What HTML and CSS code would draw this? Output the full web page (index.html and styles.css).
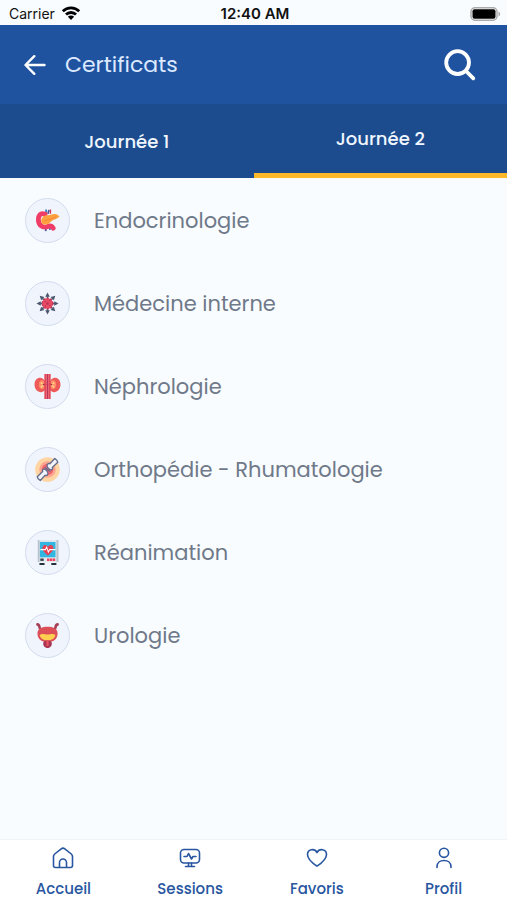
FILE: index.html
```html
<!DOCTYPE html>
<html lang="fr">
<head>
<meta charset="utf-8">
<meta name="viewport" content="width=device-width, initial-scale=1">
<title>Certificats</title>
<link rel="stylesheet" href="styles.css">
</head>
<body>
<div class="app">
  <div class="status">
    <div class="carrier">
      <span>Carrier</span>
      <svg width="20" height="15" viewBox="0 0 20 15" fill="none" stroke="#000" stroke-width="2.8"><path d="M1.800 5.200a11.600 11.600 0 0 1 16.400 0M5 8.600a7 7 0 0 1 10 0"/><path d="M10 14l-3.100-3.200a4.400 4.400 0 0 1 6.200 0z" fill="#000" stroke="none"/></svg>
    </div>
    <span class="time">12:40 AM</span>
    <svg class="battery" width="31" height="14" viewBox="0 0 31 14"><rect x="1" y=".8" width="26" height="12.4" rx="4" fill="#fff" stroke="#aaa" stroke-width="1.5"/><rect x="2.5" y="2.3" width="23" height="9.4" rx="2" fill="#000"/><path d="M28.5 4.500c2.200.8 2.200 4.200 0 5z" fill="#aaa"/></svg>
  </div>
  <header class="header">
    <button class="icon-button" type="button" aria-label="Retour">
      <svg width="22" height="22" viewBox="0 0 22 22" fill="none" stroke="#fff" stroke-width="2.4" stroke-linecap="round" stroke-linejoin="round"><path d="M20.500 11H1.800M10.300 2.200L1.500 11l8.800 8.800"/></svg>
    </button>
    <h1 class="title">Certificats</h1>
    <button class="icon-button" type="button" aria-label="Rechercher">
      <svg width="32" height="32" viewBox="0 0 32 32" fill="none" stroke="#fff" stroke-width="3.800" stroke-linecap="round"><circle cx="13.600" cy="13.600" r="11.400"/><path d="M22 22l7.300 7.300"/></svg>
    </button>
  </header>
  <div class="tabs" role="tablist">
    <button class="tab" type="button" role="tab" aria-selected="false">Journée 1</button>
    <button class="tab active" type="button" role="tab" aria-selected="true">Journée 2</button>
  </div>
  <main class="list">
    <a class="row" href="#">
      <span class="badge"><svg viewBox="0 0 26 26">
        <path d="M11.500 1.500v5M15.500 19v4" stroke="#3c7fb9" stroke-width="1.800"/><path d="M14.500 2l-1 4M12 19l-1 5" stroke="#45599b" stroke-width="1.800"/><path d="M16 1.500V6" stroke="#d8375a" stroke-width="1.500"/>
        <path d="M10.500 6.500C5.500 4.500 3.500 8 3.500 12c0 6 4.500 9 9 7.500 2.500-1.200 5-1 6.500 1.500" fill="none" stroke="#ef3d68" stroke-width="5" stroke-linecap="round" stroke-linejoin="round"/>
        <path d="M6.500 14c0-5 3-6.500 7-6.500 3.500 0 4.500-1.500 7.500-1.200 2 .1 2.700 1.500 4.500 2.200-1 1.800-3.500 2.800-6 3.800-3 1.200-3.500 3.500-6.500 4.500-3.500 1-6.500.2-6.500-2.800z" fill="#ffa13f"/><path d="M9.500 13.500c4-2 7-1 12-4.500" fill="none" stroke="#f78336" stroke-width="1"/>
      </svg></span><span>Endocrinologie</span>
    </a>
    <a class="row" href="#">
      <span class="badge"><svg viewBox="0 0 26 26">
        <g fill="#4b5870"><path id="arrow" d="M13 1.500l2.400 4.500h-1.600V9h-1.600V6h-1.600z"/><use href="#arrow" transform="rotate(45 13 13)"/><use href="#arrow" transform="rotate(90 13 13)"/><use href="#arrow" transform="rotate(135 13 13)"/><use href="#arrow" transform="rotate(180 13 13)"/><use href="#arrow" transform="rotate(225 13 13)"/><use href="#arrow" transform="rotate(270 13 13)"/><use href="#arrow" transform="rotate(315 13 13)"/></g>
        <circle cx="13" cy="13" r="5.500" fill="#e84a66" stroke="#c83755" stroke-width="1.500" stroke-dasharray="2 1.500"/><circle cx="13" cy="13" r="1.300" fill="#b73150"/><path d="M10 11h1M14.500 10h1M10.500 15.500h1M15 15h1" stroke="#ad2c4b"/>
      </svg></span><span>Médecine interne</span>
    </a>
    <a class="row" href="#">
      <span class="badge"><svg viewBox="0 0 26 26">
        <path d="M10.500 8C8 1.500-.5 3-.5 11s8 10 11 5.500zM15.500 8c2.500-6.500 11-5 11 3s-8 10-11 5.500z" fill="#ed5a58"/>
        <path d="M10 8.500C8 5 4 6.500 4 11s3.500 6 6 3M16 8.500c2-3.500 6-2 6 2.500s-3.500 6-6 3" fill="#ff9168"/>
        <path d="M6 9l3 2-3 3M20 9l-3 2 3 3" fill="none" stroke="#ffd084" stroke-width="1.600"/><path d="M8 11h4M14 11h4" stroke="#a72d50" stroke-width="1.500"/>
        <path d="M11 0v26" stroke="#e34859" stroke-width="2.600"/><path d="M15 0v26" stroke="#e34859" stroke-width="2.600"/><path d="M13 0v26" stroke="#b72e54"/>
      </svg></span><span>Néphrologie</span>
    </a>
    <a class="row" href="#">
      <span class="badge"><svg viewBox="0 0 26 26">
        <circle cx="13" cy="13" r="12.800" fill="#ffd5a4"/><circle cx="13" cy="13" r="8.600" fill="#ffa78e"/><circle cx="13" cy="13" r="6" fill="#f06670"/>
        <path d="M14 12c-3-3-1-6 1.500-5l5-5.500 2.200 1.800 1 2.200-5.700 5.500c1 2-1 3.500-4 1zM12 14c3 3 1 6-1.500 5l-5 5.500-2.200-1.800-1-2.200 5.700-5.500c-1-2 1-3.500 4-1z" fill="#f1f4fa" stroke="#646d8b" stroke-width="1.400" stroke-linejoin="round"/><path d="M10 11l6 4" stroke="#646d8b" stroke-width="1.300"/>
      </svg></span><span>Orthopédie - Rhumatologie</span>
    </a>
    <a class="row" href="#">
      <span class="badge"><svg viewBox="0 0 26 26"><g transform="translate(2 0) scale(.88 1)">
        <path d="M2 0h22v23H2z" fill="#e4e9ef"/><path d="M1 0h2v23H1zM23 0h2.500v23H23z" fill="#b8c2cc"/><path d="M3.500 2h18.500v16H3.500z" fill="#31b6e1"/>
        <path d="M13 16C8 12.500 5.500 10 6.800 7c1.200-2.800 5-2.400 6.200.3C14.200 4.600 18 4.200 19.200 7c1.300 3-1.200 5.500-6.200 9z" fill="#e74054"/><path d="M4 10h6l1.500-2.500 2 5L15 10h7" fill="none" stroke="#fff" stroke-width="1.100"/>
        <path d="M4 20.500h4" stroke="#34404c" stroke-width="2.500"/><path d="M12 20.500h10" stroke="#ed405b" stroke-width="2.500" stroke-dasharray="2.800 .6"/><path d="M3 25h6M17 25h6" stroke="#26313d" stroke-width="2"/>
      </g></svg></span><span>Réanimation</span>
    </a>
    <a class="row" href="#">
      <span class="badge"><svg viewBox="0 0 26 26"><g transform="translate(1.200 0) scale(.91 1)">
        <path d="M1.500 1.500c3.500 0 1 5 4.500 6M24.500 1.500c-3.500 0-1 5-4.500 6" fill="none" stroke="#a73f57" stroke-width="3" stroke-linecap="round"/>
        <path d="M13 4c6 0 11.500 1.500 11.500 7 0 6-5 9-11.500 9S1.500 17 1.500 11C1.500 5.500 7 4 13 4z" fill="#dc4f58"/><path d="M4 12.500c3-2 5-.5 9-.5s6-1.500 9 .5c-.8 3.500-4 5.500-9 5.500s-8.200-2-9-5.500z" fill="#ffcf50"/>
        <path d="M8.500 19.500c2-1.500 7-1.500 9 0 1.500 4-1.500 6.500-4.500 6.500s-6-2.500-4.500-6.500z" fill="#a73452"/><path d="M13 18v6" stroke="#e6555f" stroke-width="2.600"/>
      </g></svg></span><span>Urologie</span>
    </a>
  </main>
  <nav class="nav">
    <a class="nav-item" href="#"><svg width="22" height="22" viewBox="0 0 22 22"><path d="M1.500 9.500c0-1 .4-1.800 1.200-2.500l6.500-5.200c1.100-.9 2.500-.9 3.600 0L19.300 7c.8.700 1.200 1.500 1.200 2.500v9c0 1.200-.8 2-2 2h-15c-1.200 0-2-.8-2-2zM7.500 20v-4.500a3.500 3.500 0 0 1 7 0V20"/></svg><span>Accueil</span></a>
    <a class="nav-item" href="#"><svg width="22" height="22" viewBox="0 0 22 22"><rect x="1.500" y="2.500" width="19" height="13.500" rx="3.500"/><path d="M5 9.500h3l1.500-3 3 5.500 1.500-2.500h3M9.500 16v3.500M12.500 16v3.500M6.500 19.500h9"/></svg><span>Sessions</span></a>
    <a class="nav-item" href="#"><svg width="22" height="22" viewBox="0 0 22 22"><path d="M11 19.200C7 16.500 1.500 12 1.500 7.500c0-5.500 7-6.500 9.500-2 2.500-4.500 9.500-3.500 9.500 2 0 4.500-5.500 9-9.500 11.700z"/></svg><span>Favoris</span></a>
    <a class="nav-item" href="#"><svg width="22" height="22" viewBox="0 0 22 22"><circle cx="11" cy="5.800" r="4.600"/><path d="M4 20.500v-.8c0-4 3-6.200 7-6.200s7 2.200 7 6.200v.8"/></svg><span>Profil</span></a>
  </nav>
</div>
</body>
</html>
```

FILE: styles.css
```css
* { box-sizing: border-box; }
body {
  margin: 0;
  background: #f8fcff;
  font-family: Poppins, Inter, "Liberation Sans", sans-serif;
}
button { border: 0; padding: 0; background: none; font: inherit; color: inherit; }
a { color: inherit; text-decoration: none; }
svg { display: block; }

.app { min-height: 100vh; display: flex; flex-direction: column; }

.status {
  height: 25px;
  padding: 2px 6px 0 9px;
  display: grid;
  grid-template-columns: 1fr auto 1fr;
  align-items: center;
  font-family: Inter, sans-serif;
  font-size: 14px;
  color: #111;
}
.carrier { display: flex; align-items: center; gap: 6px; }
.time { font-size: 15px; font-weight: 600; }
.battery { justify-self: end; }

.header {
  height: 79px;
  padding: 0 31px 0 24px;
  display: flex;
  align-items: center;
  gap: 19px;
  background: #20539f;
}
.title { flex: 1; margin: 0; font-size: 22px; font-weight: 400; color: #dce9ff; }

.tabs { height: 74px; display: flex; background: #1c4c8e; color: #f0f6ff; }
.tab { flex: 1; font-size: 18px; font-weight: 500; }
.tab.active { border-bottom: 5px solid #fbb829; }

.list { flex: 1; }
.row {
  height: 83px;
  padding: 1px 25px 0;
  display: flex;
  align-items: center;
  gap: 24px;
  font-size: 21px;
  color: #6f7989;
}
.badge {
  width: 45px;
  height: 45px;
  display: grid;
  place-items: center;
  border: 1px solid #d3dcef;
  border-radius: 50%;
  background: #f0f4fc;
}
.badge svg { width: 25px; height: 25px; overflow: visible; }

.nav {
  height: 61px;
  display: flex;
  background: #fff;
  border-top: 1px solid #f0f3f7;
  color: #2856a0;
}
.nav-item {
  flex: 1;
  padding-top: 7px;
  display: flex;
  flex-direction: column;
  align-items: center;
  gap: 10px;
  font-size: 15px;
  line-height: 20px;
  font-weight: 500;
}
.nav-item svg { fill: none; stroke: currentColor; stroke-width: 1.6; stroke-linecap: round; stroke-linejoin: round; }
```
